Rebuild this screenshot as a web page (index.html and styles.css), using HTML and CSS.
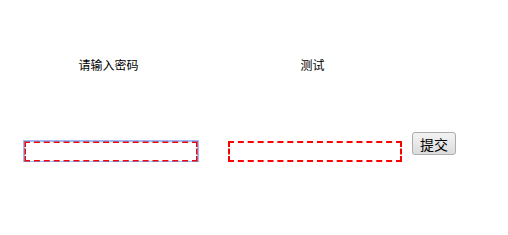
FILE: index.html
```html
<!DOCTYPE html>
<html>

<head>
    <meta charset="UTF-8">
    <title>密码测试</title>
    <link rel="stylesheet" href="styles.css">
</head>

<body>
    <div class="labels">
        <span class="label">请输入密码</span>
        <span class="label">测试</span>
    </div>
    <div class="form">
        <input type="password" class="pwd focused">
        <input type="text" class="pwd">
        <button class="submit">提交</button>
    </div>
</body>

</html>
```

FILE: styles.css
```css
* {
    box-sizing: border-box;
}

body {
    margin: 0;
    background: #fff;
    font-family: "Microsoft YaHei", "Noto Sans CJK SC", sans-serif;
    color: #000;
}

.labels {
    display: flex;
    gap: 30px;
    padding-top: 57px;
    padding-left: 24px;
}

.label {
    width: 174px;
    padding-right: 5px;
    text-align: center;
    font-size: 12px;
    line-height: 16px;
}

.form {
    display: flex;
    align-items: flex-start;
    margin-top: 59px;
    padding-left: 24px;
}

.pwd {
    width: 174px;
    height: 21px;
    margin: 9px 30px 0 0;
    padding: 1px;
    border: 2px dashed #f00;
    outline: none;
    background: #fff;
}

.pwd + .pwd {
    margin-right: 10px;
}

.focused {
    outline: 2px solid rgba(110, 150, 235, 0.65);
    outline-offset: -1px;
}

.submit {
    width: 44px;
    height: 23px;
    padding: 0;
    border: 1px solid #acacac;
    border-radius: 3px;
    background: linear-gradient(#f3f3f3, #dcdcdc);
    font-family: inherit;
    font-size: 14px;
    line-height: 20px;
    color: #000;
}
```
